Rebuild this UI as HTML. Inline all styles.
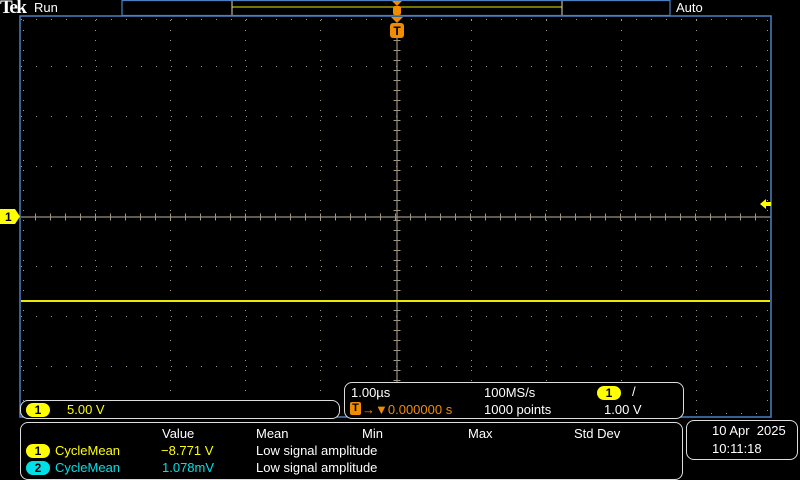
<!DOCTYPE html>
<html><head><style>
body{margin:0;width:800px;height:480px;background:#000;overflow:hidden;position:relative;font-family:"Liberation Sans",sans-serif;font-size:12px;color:#fff}
.a{position:absolute;white-space:nowrap}
.box{position:absolute;border:1.5px solid #ddd;border-radius:8px;background:#000}
.pill{position:absolute;background:#ffff00;color:#000;border-radius:8px;font-weight:bold;text-align:center;font-size:12px;line-height:14px;height:14px}
</style></head><body>
<svg class="a" style="left:0;top:0" width="800" height="480">
<rect x="20" y="16" width="751" height="401" fill="#000"/>
<g stroke="#a09880" stroke-width="1" stroke-dasharray="1 9">
<line x1="95.5" y1="20" x2="95.5" y2="417"/>
<line x1="170.5" y1="20" x2="170.5" y2="417"/>
<line x1="245.5" y1="20" x2="245.5" y2="417"/>
<line x1="320.5" y1="20" x2="320.5" y2="417"/>
<line x1="471.5" y1="20" x2="471.5" y2="417"/>
<line x1="546.5" y1="20" x2="546.5" y2="417"/>
<line x1="621.5" y1="20" x2="621.5" y2="417"/>
<line x1="696.5" y1="20" x2="696.5" y2="417"/>
<line x1="23.5" y1="20" x2="23.5" y2="417"/>
<line x1="767.5" y1="20" x2="767.5" y2="417"/>
</g>
<g stroke="#a09880" stroke-width="1" stroke-dasharray="1 14">
<line x1="21" y1="66.5" x2="770" y2="66.5"/>
<line x1="21" y1="116.5" x2="770" y2="116.5"/>
<line x1="21" y1="166.5" x2="770" y2="166.5"/>
<line x1="21" y1="266.5" x2="770" y2="266.5"/>
<line x1="21" y1="316.5" x2="770" y2="316.5"/>
<line x1="21" y1="366.5" x2="770" y2="366.5"/>
<line x1="21" y1="19.5" x2="770" y2="19.5"/>
<line x1="21" y1="413.5" x2="770" y2="413.5"/>
</g>
<g stroke="#a09880" stroke-width="1" stroke-dasharray="1 14">
<line x1="35" y1="217" x2="770" y2="217" stroke-width="7"/>
</g>
<g stroke="#a09880" stroke-width="1" stroke-dasharray="1 9">
<line x1="397" y1="40" x2="397" y2="417" stroke-width="7"/>
</g>
<line x1="21" y1="217" x2="771" y2="217" stroke="#9a9080" stroke-width="1.2"/>
<line x1="397" y1="36" x2="397" y2="417" stroke="#9a9080" stroke-width="1.2"/>
<rect x="20" y="16" width="751" height="401" fill="none" stroke="#4a80c0" stroke-width="1.5"/>
<line x1="21" y1="301" x2="770" y2="301" stroke="#e8e800" stroke-width="2"/>
<rect x="122" y="0.5" width="548" height="15" fill="none" stroke="#4a80c0" stroke-width="1.2"/>
<line x1="232" y1="1" x2="232" y2="15" stroke="#9a9080" stroke-width="1.5"/>
<line x1="562" y1="1" x2="562" y2="15" stroke="#9a9080" stroke-width="1.5"/>
<line x1="232" y1="7" x2="562" y2="7" stroke="#e8e800"/>
<path d="M392 1h10l-5 5z" fill="#f08c00"/>
<rect x="393" y="6" width="8" height="9" rx="2" fill="#f08c00"/>
<path d="M391 17h12l-6 6z" fill="#f08c00"/>
<rect x="390" y="23" width="14" height="15" rx="3" fill="#f08c00"/>
<text x="397" y="35" text-anchor="middle" font-family="Liberation Sans" font-weight="bold" font-size="12" fill="#000">T</text>
<path d="M0 209h15l5 7.5-5 7.5H0z" fill="#ffff00"/>
<text x="5" y="221" font-family="Liberation Sans" font-weight="bold" font-size="12" fill="#000">1</text>
<path d="M760 204l6-5v3h5v4h-5v3z" fill="#ffff00"/>
</svg>
<div class="a" style="left:0;top:-3px;font-weight:bold;font-size:19px;letter-spacing:-1.5px;font-family:'Liberation Serif',serif">Tek</div>
<div class="a" style="left:34px;top:0;font-size:13px">Run</div>
<div class="a" style="left:676px;top:0;font-size:13px">Auto</div>

<div class="box" style="left:20px;top:400px;width:318px;height:17px"></div>
<div class="pill" style="left:26px;top:403px;width:24px">1</div>
<div class="a" style="left:67px;top:402px;color:#ffff00;font-size:13px">5.00 V</div>

<div class="box" style="left:344px;top:382px;width:338px;height:35px"></div>
<div class="a" style="left:351px;top:385px;font-size:13px">1.00µs</div>
<div class="a" style="left:484px;top:385px;font-size:13px">100MS/s</div>
<div class="pill" style="left:597px;top:386px;width:24px">1</div>
<div class="a" style="left:632px;top:384px;font-size:13px">/</div>
<div class="a" style="left:350px;top:402px;width:11px;height:13px;background:#f08c00;border-radius:2px;color:#000;font-weight:bold;font-size:11px;text-align:center;line-height:13px">T</div>
<div class="a" style="left:362px;top:402px;color:#f08c00;font-size:13px">→▼0.000000 s</div>
<div class="a" style="left:484px;top:402px;font-size:13px">1000 points</div>
<div class="a" style="left:604px;top:402px;font-size:13px">1.00 V</div>

<div class="box" style="left:20px;top:422px;width:661px;height:56px"></div>
<div class="a" style="left:162px;top:426px;font-size:13px">Value</div>
<div class="a" style="left:256px;top:426px;font-size:13px">Mean</div>
<div class="a" style="left:362px;top:426px;font-size:13px">Min</div>
<div class="a" style="left:468px;top:426px;font-size:13px">Max</div>
<div class="a" style="left:574px;top:426px;font-size:13px">Std Dev</div>
<div class="pill" style="left:26px;top:444px;width:24px">1</div>
<div class="a" style="left:55px;top:443px;color:#ffff00;font-size:13px">CycleMean</div>
<div class="a" style="left:161px;top:443px;color:#ffff00;font-size:13px">−8.771 V</div>
<div class="a" style="left:256px;top:443px;font-size:13px">Low signal amplitude</div>
<div class="pill" style="left:26px;top:461px;width:24px;background:#00e0e8">2</div>
<div class="a" style="left:55px;top:460px;color:#00e0e8;font-size:13px">CycleMean</div>
<div class="a" style="left:162px;top:460px;color:#00e0e8;font-size:13px">1.078mV</div>
<div class="a" style="left:256px;top:460px;font-size:13px">Low signal amplitude</div>

<div class="box" style="left:686px;top:420px;width:110px;height:38px"></div>
<div class="a" style="left:712px;top:423px;font-size:13px">10 Apr&nbsp; 2025</div>
<div class="a" style="left:712px;top:441px;font-size:13px">10:11:18</div>
</body></html>
